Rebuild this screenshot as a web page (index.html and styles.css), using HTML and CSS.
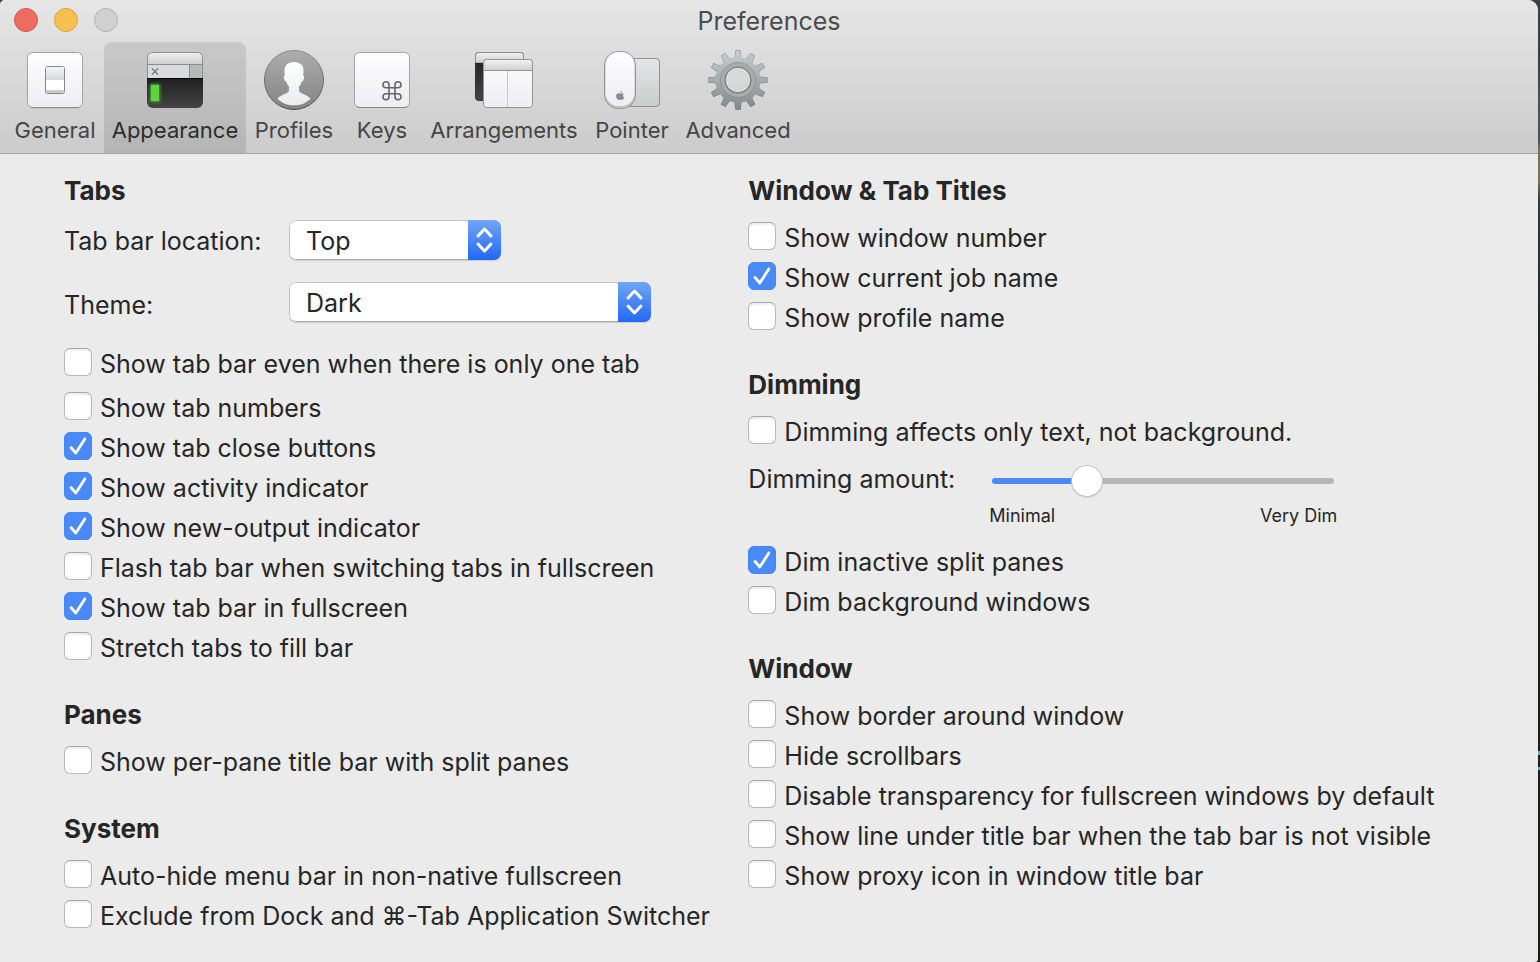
FILE: index.html
```html
<!DOCTYPE html>
<html lang="en">
<head>
<meta charset="utf-8">
<title>Preferences</title>
<link rel="stylesheet" href="styles.css">
</head>
<body>
<div class="window">
  <header class="toolbar">
    <div class="titlebar">
      <div class="lights">
        <button class="light light-close" aria-label="Close"></button>
        <button class="light light-minimize" aria-label="Minimize"></button>
        <button class="light light-zoom" aria-label="Zoom" disabled></button>
      </div>
      <h1 class="title">Preferences</h1>
    </div>
    <nav class="tools">
      <button class="tool">
        <svg class="tool-icon" viewBox="0 0 60 60" aria-hidden="true">
          <defs>
            <linearGradient id="paper" x1="0" y1="0" x2="0" y2="1"><stop offset="0" stop-color="#fdfdfe"/><stop offset="1" stop-color="#ededf2"/></linearGradient>
            <linearGradient id="switch" x1="0" y1="0" x2="0" y2="1"><stop offset="0" stop-color="#f2f4f6"/><stop offset="1" stop-color="#d5d9de"/></linearGradient>
          </defs>
          <rect x="2.500" y="2.500" width="55" height="55" rx="5" fill="url(#paper)" stroke="#a2a2a6"/>
          <path d="M6 57.700h48" stroke="#88888c"/>
          <rect x="20.500" y="16.500" width="19" height="27" rx="2" fill="#fff" stroke="#85858a"/>
          <path d="M21 17h18v13H21z" fill="url(#switch)"/>
          <path d="M21 40h18v3H21z" fill="#c9cbca"/>
        </svg>
        <span>General</span>
      </button>
      <button class="tool tool-active" aria-current="page">
        <svg class="tool-icon" viewBox="0 0 60 60" aria-hidden="true">
          <defs>
            <linearGradient id="bar" x1="0" y1="0" x2="0" y2="1"><stop offset="0" stop-color="#f1f1f1"/><stop offset="1" stop-color="#cfcfd0"/></linearGradient>
            <linearGradient id="term" x1="0" y1="0" x2="0" y2="1"><stop offset="0" stop-color="#1f1f1f"/><stop offset="1" stop-color="#444"/></linearGradient>
            <clipPath id="frame"><rect x="2" y="2" width="56" height="56" rx="6"/></clipPath>
            <filter id="glow" x="-50%" y="-50%" width="200%" height="200%"><feGaussianBlur stdDeviation="1.500"/></filter>
          </defs>
          <g clip-path="url(#frame)">
            <path d="M2 2h56v12H2z" fill="url(#bar)"/>
            <path d="M2 14h42v14H2z" fill="#d9dadc"/>
            <path d="M44 14h14v14H44z" fill="#b6b8bb"/>
            <path d="M2 14.500h56M44.500 14v14" stroke="#8c8c8e" fill="none"/>
            <path d="M2 28h56v30H2z" fill="url(#term)"/>
            <path d="M2 28.500h56" stroke="#050505"/>
          </g>
          <path d="M7 18.500l6 6M13 18.500l-6 6" stroke="#77777a" stroke-width="1.300" fill="none"/>
          <rect x="5" y="34" width="10" height="18" fill="#39b525" filter="url(#glow)"/>
          <rect x="6" y="35" width="8" height="16" fill="#5ed43f"/>
          <path d="M2.500 28V8q0-5.500 5.500-5.500h44q5.500 0 5.500 5.500v20" fill="none" stroke="#8f8f91"/>
        </svg>
        <span>Appearance</span>
      </button>
      <button class="tool">
        <svg class="tool-icon" viewBox="0 0 60 60" aria-hidden="true">
          <defs>
            <linearGradient id="disc" x1="0" y1="0" x2="0" y2="1"><stop offset="0" stop-color="#adadad"/><stop offset="1" stop-color="#838383"/></linearGradient>
            <linearGradient id="rim" x1="0" y1="0" x2="0" y2="1"><stop offset="0" stop-color="#8a8a8a"/><stop offset="1" stop-color="#4f4f4f"/></linearGradient>
            <linearGradient id="bust" x1="0" y1="0" x2="0" y2="1"><stop offset="0" stop-color="#fff"/><stop offset="1" stop-color="#e9ebef"/></linearGradient>
          </defs>
          <circle cx="30" cy="30" r="29.500" fill="url(#disc)" stroke="url(#rim)"/>
          <path d="M30 12c-6.500 0-10 3.500-9.500 10l.3 3.600c-1.200.2-1.100 1.700-.6 3.300.4 1.500 1 2.400 1.900 2.300.6 2.300 1.600 4 2.900 5.200v4.700c-2 3-8.500 3.700-11.500 7.600 4.300 4.300 10 6.600 16.500 6.600s12.200-2.300 16.500-6.600C43.500 44.800 37 44.100 35 41.100v-4.700c1.300-1.200 2.300-2.900 2.900-5.200.9.100 1.500-.8 1.900-2.300.5-1.600.6-3.100-.6-3.300l.3-4.100c.3-4.500-1-7-4-8-1.500-1-3.200-1.500-5.500-1.500z" fill="url(#bust)"/>
        </svg>
        <span>Profiles</span>
      </button>
      <button class="tool">
        <svg class="tool-icon" viewBox="0 0 60 60" aria-hidden="true">
          <rect x="2.500" y="2.500" width="55" height="55" rx="5" fill="url(#paper)" stroke="#a2a2a6"/>
          <path d="M5 56.500q1 1 3 1h44q2 0 3-1" stroke="#88888c" fill="none"/>
          <path d="M37.500 37.500h6v6h-6zM37.500 37.500v-3a3 3 0 1 0-3 3zM43.500 37.500h3a3 3 0 1 0-3-3zM43.500 43.500v3a3 3 0 1 0 3-3zM37.500 43.500h-3a3 3 0 1 0 3 3z" transform="translate(-.5 .3)" fill="none" stroke="#66666a" stroke-width="1.600"/>
        </svg>
        <span>Keys</span>
      </button>
      <button class="tool">
        <svg class="tool-icon" viewBox="0 0 60 60" aria-hidden="true">
          <rect x="1.500" y="2.500" width="48" height="48" rx="3" fill="url(#term)" stroke="#333"/>
          <path d="M1.500 13V5.500q0-3 3-3h42q3 0 3 3V13z" fill="url(#bar)" stroke="#8e8e90"/>
          <path d="M1 13.500h49" stroke="#222"/>
          <rect x="9.500" y="9.500" width="49" height="48" rx="3" fill="url(#paper)" stroke="#929296"/>
          <path d="M9.500 20.500v-8q0-3 3-3h43q3 0 3 3v8z" fill="url(#bar)" stroke="#929296"/>
          <path d="M33.500 21v36" stroke="#c8c9cd"/>
        </svg>
        <span>Arrangements</span>
      </button>
      <button class="tool">
        <svg class="tool-icon" viewBox="0 0 60 60" aria-hidden="true">
          <defs>
            <linearGradient id="pad" x1="0" y1="0" x2="0" y2="1"><stop offset="0" stop-color="#e3e6e6"/><stop offset="1" stop-color="#c8cccb"/></linearGradient>
          </defs>
          <rect x="14.500" y="8.500" width="43" height="48" rx="3.500" fill="url(#pad)" stroke="#8f9292"/>
          <rect x="2.500" y="1.500" width="31" height="57" rx="14" fill="#c5c5c8" stroke="#929295"/>
          <rect x="3.500" y="2" width="29" height="54" rx="13" fill="url(#paper)"/>
          <path d="M18.800 43.600c0-1.200.7-2 1.700-2.200.1 1.100-.7 2.100-1.700 2.200zm2.100.3c.7 0 1.300.3 1.700.9-1.500.9-1.200 2.900.2 3.500-.5 1.400-1.200 2.300-2 2.300-.7 0-1-.3-1.700-.3s-1 .3-1.700.3c-1.300 0-2.600-2-2.600-3.900 0-1.700 1-2.800 2.300-2.800.8 0 1.300.4 1.900.4s1.200-.4 1.900-.4z" transform="translate(-.7 -.7)" fill="#8a8a8e"/>
        </svg>
        <span>Pointer</span>
      </button>
      <button class="tool">
        <svg class="tool-icon" viewBox="0 0 60 60" aria-hidden="true">
          <defs>
            <linearGradient id="steel" gradientUnits="userSpaceOnUse" x1="0" y1="0" x2="0" y2="60"><stop offset="0" stop-color="#c6ced1"/><stop offset="1" stop-color="#84898b"/></linearGradient>
            <linearGradient id="edge" gradientUnits="userSpaceOnUse" x1="0" y1="0" x2="0" y2="60"><stop offset="0" stop-color="#8f979b"/><stop offset="1" stop-color="#5f6466"/></linearGradient>
            <g id="gear">
              <circle cx="30" cy="30" r="22.500"/>
              <path id="tooth" d="M27.400.3h5.200l1 8h1.500v43.400h-1.500l-1 8h-5.200l-1-8h-1.500V8.300h1.500z"/>
              <use href="#tooth" transform="rotate(30 30 30)"/>
              <use href="#tooth" transform="rotate(60 30 30)"/>
              <use href="#tooth" transform="rotate(90 30 30)"/>
              <use href="#tooth" transform="rotate(120 30 30)"/>
              <use href="#tooth" transform="rotate(150 30 30)"/>
            </g>
            <mask id="outer" maskUnits="userSpaceOnUse" x="0" y="0" width="60" height="60">
              <use href="#gear" fill="#fff"/>
              <circle cx="30" cy="30" r="12.500" fill="#000"/>
            </mask>
            <mask id="inner" maskUnits="userSpaceOnUse" x="0" y="0" width="60" height="60">
              <use href="#gear" fill="#fff" stroke="#fff" stroke-width="0"/>
              <g fill="none" stroke="#000" stroke-width="1.200">
                <path id="side" d="M26.300 7.500l1.100-7.200h5.200l1.100 7.200"/>
                <use href="#side" transform="rotate(30 30 30)"/>
                <use href="#side" transform="rotate(60 30 30)"/>
                <use href="#side" transform="rotate(90 30 30)"/>
                <use href="#side" transform="rotate(120 30 30)"/>
                <use href="#side" transform="rotate(150 30 30)"/>
                <use href="#side" transform="rotate(180 30 30)"/>
                <use href="#side" transform="rotate(210 30 30)"/>
                <use href="#side" transform="rotate(240 30 30)"/>
                <use href="#side" transform="rotate(270 30 30)"/>
                <use href="#side" transform="rotate(300 30 30)"/>
                <use href="#side" transform="rotate(330 30 30)"/>
              </g>
              <circle cx="30" cy="30" r="13.300" fill="#000"/>
            </mask>
          </defs>
          <path d="M0 0h60v60H0z" fill="url(#edge)" mask="url(#outer)"/>
          <path d="M0 0h60v60H0z" fill="url(#steel)" mask="url(#inner)"/>
          <circle cx="30" cy="30" r="15.300" fill="none" stroke="#a6adb0" stroke-width="3.500"/>
          <circle cx="30" cy="30" r="17.500" fill="none" stroke="#888f92" stroke-width=".8"/>
          <circle cx="30" cy="30" r="13" fill="none" stroke="#72787b"/>
        </svg>
        <span>Advanced</span>
      </button>
    </nav>
  </header>

  <main class="content">
    <div class="column">
      <section class="group">
        <h2 class="heading">Tabs</h2>
        <div class="fields">
          <label class="field-label" for="location">Tab bar location:</label>
          <div class="popup popup-short">
            <select id="location"><option>Top</option><option>Bottom</option><option>Left</option></select>
            <svg class="stepper" viewBox="0 0 33 40" aria-hidden="true"><path d="M10 16l6.500-7 6.500 7M10 24l6.500 7 6.500-7"/></svg>
          </div>
          <label class="field-label field-label-low" for="theme">Theme:</label>
          <div class="popup popup-long">
            <select id="theme"><option>Dark</option><option>Light</option></select>
            <svg class="stepper" viewBox="0 0 33 40" aria-hidden="true"><path d="M10 16l6.500-7 6.500 7M10 24l6.500 7 6.500-7"/></svg>
          </div>
        </div>
        <div class="checks">
          <label class="check check-spaced"><input type="checkbox"><span>Show tab bar even when there is only one tab</span></label>
          <label class="check"><input type="checkbox"><span>Show tab numbers</span></label>
          <label class="check"><input type="checkbox" checked><span>Show tab close buttons</span></label>
          <label class="check"><input type="checkbox" checked><span>Show activity indicator</span></label>
          <label class="check"><input type="checkbox" checked><span>Show new-output indicator</span></label>
          <label class="check"><input type="checkbox"><span>Flash tab bar when switching tabs in fullscreen</span></label>
          <label class="check"><input type="checkbox" checked><span>Show tab bar in fullscreen</span></label>
          <label class="check"><input type="checkbox"><span>Stretch tabs to fill bar</span></label>
        </div>
      </section>
      <section class="group">
        <h2 class="heading">Panes</h2>
        <div class="checks">
          <label class="check"><input type="checkbox"><span>Show per-pane title bar with split panes</span></label>
        </div>
      </section>
      <section class="group">
        <h2 class="heading">System</h2>
        <div class="checks">
          <label class="check"><input type="checkbox"><span>Auto-hide menu bar in non-native fullscreen</span></label>
          <label class="check"><input type="checkbox"><span>Exclude from Dock and ⌘-Tab Application Switcher</span></label>
        </div>
      </section>
    </div>

    <div class="column">
      <section class="group">
        <h2 class="heading">Window &amp; Tab Titles</h2>
        <div class="checks">
          <label class="check"><input type="checkbox"><span>Show window number</span></label>
          <label class="check"><input type="checkbox" checked><span>Show current job name</span></label>
          <label class="check"><input type="checkbox"><span>Show profile name</span></label>
        </div>
      </section>
      <section class="group">
        <h2 class="heading">Dimming</h2>
        <div class="checks">
          <label class="check"><input type="checkbox"><span>Dimming affects only text, not background.</span></label>
        </div>
        <div class="amount">
          <label class="amount-label" for="dimming">Dimming amount:</label>
          <div class="amount-control">
            <input class="slider" id="dimming" type="range" min="0" max="1000" value="256">
            <div class="ticks"><span>Minimal</span><span>Very Dim</span></div>
          </div>
        </div>
        <div class="checks">
          <label class="check"><input type="checkbox" checked><span>Dim inactive split panes</span></label>
          <label class="check"><input type="checkbox"><span>Dim background windows</span></label>
        </div>
      </section>
      <section class="group">
        <h2 class="heading">Window</h2>
        <div class="checks">
          <label class="check"><input type="checkbox"><span>Show border around window</span></label>
          <label class="check"><input type="checkbox"><span>Hide scrollbars</span></label>
          <label class="check"><input type="checkbox"><span>Disable transparency for fullscreen windows by default</span></label>
          <label class="check"><input type="checkbox"><span>Show line under title bar when the tab bar is not visible</span></label>
          <label class="check"><input type="checkbox"><span>Show proxy icon in window title bar</span></label>
        </div>
      </section>
    </div>
  </main>
</div>
</body>
</html>
```
FILE: styles.css
```css
* {
  box-sizing: border-box;
}

body {
  margin: 0;
  padding-right: 2px;
  min-height: 100vh;
  display: flex;
  background: linear-gradient(#3b4045 0 60px, #4a5157 100px 140px, #77764f 150px 180px, #33373a 200px, #1d1d1b 400px 751px, #5fb5ad 751px 755px, #1d1d1b 755px 767px, #5fb5ad 767px 770px, #1d1d1b 770px);
  color: #262626;
  font: 25px/30px Inter, "Liberation Sans", sans-serif;
}

button,
select {
  font: inherit;
  color: inherit;
}

.window {
  flex: 1;
  min-width: 0;
  overflow: hidden;
  border-radius: 5px 10px 3px 0;
  background: #ebebeb;
}

/* Title bar and toolbar */

.toolbar {
  background: linear-gradient(#e6e6e6, #cbcbcb);
  border-bottom: 1px solid #a6a6a6;
}

.titlebar {
  display: grid;
  grid-template-columns: 1fr auto 1fr;
  height: 42px;
}

.lights {
  display: flex;
  gap: 16px;
  padding: 8px 14px;
}

.light {
  width: 24px;
  height: 24px;
  padding: 0;
  border: 1px solid;
  border-radius: 50%;
}

.light-close {
  background: #ed6b60;
  border-color: #d9564b;
}

.light-minimize {
  background: #f5c04f;
  border-color: #dba13a;
}

.light-zoom {
  background: #d0d0d0;
  border-color: #b2b2b2;
}

.title {
  margin: 0;
  font-size: 25px;
  font-weight: 400;
  line-height: 42px;
  color: #4b4b4b;
}

.tools {
  display: grid;
  grid-template-columns: 98px 142px 96px 80px 164px 92px 120px;
  padding-left: 6px;
}

.tool {
  display: flex;
  flex-direction: column;
  align-items: center;
  gap: 6px;
  padding: 8px 0;
  border: 0;
  border-radius: 8px 8px 0 0;
  background: none;
  color: #454545;
  font-size: 22px;
  line-height: 29px;
}

.tool-active {
  background: linear-gradient(#c8c8c8, #b5b5b5);
  color: #2b2b2b;
}

.tool-icon {
  width: 60px;
  height: 60px;
}

/* Settings */

.content {
  display: grid;
  grid-template-columns: 13fr 15fr;
  padding: 22px 0 32px 64px;
}

.column {
  display: flex;
  flex-direction: column;
  gap: 40px;
}

.heading {
  margin: 0 0 16px;
  font-size: 26px;
  font-weight: 700;
}

.fields {
  display: grid;
  grid-template-columns: 225px 1fr;
  row-gap: 22px;
  margin: -2px 0 26px;
}

.field-label {
  padding-top: 6px;
}

.field-label-low {
  padding-top: 8px;
}

.popup {
  display: grid;
  grid-template-columns: 1fr 33px;
  height: 40px;
  overflow: hidden;
  border-radius: 7px;
  background: #fff;
  box-shadow: 0 1px 1px #ccc;
}

.popup-short {
  width: 212px;
}

.popup-long {
  width: 362px;
}

.popup select {
  grid-area: 1 / 1 / 2 / 3;
  padding: 2px 40px 0 16px;
  border: 1px solid #c6c6c6;
  border-bottom-color: #adadad;
  border-radius: 7px;
  background: none;
  appearance: none;
}

.stepper {
  grid-area: 1 / 2;
  width: 33px;
  height: 40px;
  background: linear-gradient(#72a5f7, #2168f6);
  fill: none;
  stroke: #fff;
  stroke-width: 3;
  stroke-linecap: round;
  stroke-linejoin: round;
  pointer-events: none;
}

.checks {
  display: flex;
  flex-direction: column;
  gap: 12px;
}

.check {
  display: flex;
  gap: 8px;
  height: 28px;
  line-height: 32px;
  white-space: nowrap;
}

.check-spaced {
  margin-bottom: 4px;
}

.check input {
  flex: none;
  width: 28px;
  height: 28px;
  margin: 0;
  border: 1px solid #b9b9b9;
  border-top-color: #a5a5a5;
  border-radius: 6px;
  background: #fff;
  box-shadow: inset 0 2px 2px #eee;
  appearance: none;
}

.check input:checked {
  border-color: #4385f5;
  background: #4a8af6 url("data:image/svg+xml,%3Csvg xmlns='http://www.w3.org/2000/svg' viewBox='0 0 26 26'%3E%3Cpath d='M6 14.500l4.800 5.500 9-14' fill='none' stroke='white' stroke-width='2.800' stroke-linecap='round' stroke-linejoin='round'/%3E%3C/svg%3E") center / 26px 26px;
  box-shadow: none;
}

.amount {
  display: grid;
  grid-template-columns: 244px 342px;
  margin: 20px 0 16px;
}

.amount-control {
  display: grid;
  gap: 6px;
}

.slider {
  width: 100%;
  height: 34px;
  margin: 0;
  background: none;
  appearance: none;
}

.slider::-webkit-slider-runnable-track {
  height: 6px;
  border-radius: 3px;
  background: linear-gradient(to right, #4a8af6 28%, #b7b7b7 28%);
}

.slider::-webkit-slider-thumb {
  width: 30px;
  height: 30px;
  margin-top: -12px;
  border-radius: 50%;
  background: #fff;
  box-shadow: 0 0 0 1px #c4c4c4, 0 1px 2px #aaa;
  appearance: none;
}

.ticks {
  display: flex;
  justify-content: space-between;
  margin: 0 -3px 2px;
  font-size: 18px;
  line-height: 24px;
}
```
